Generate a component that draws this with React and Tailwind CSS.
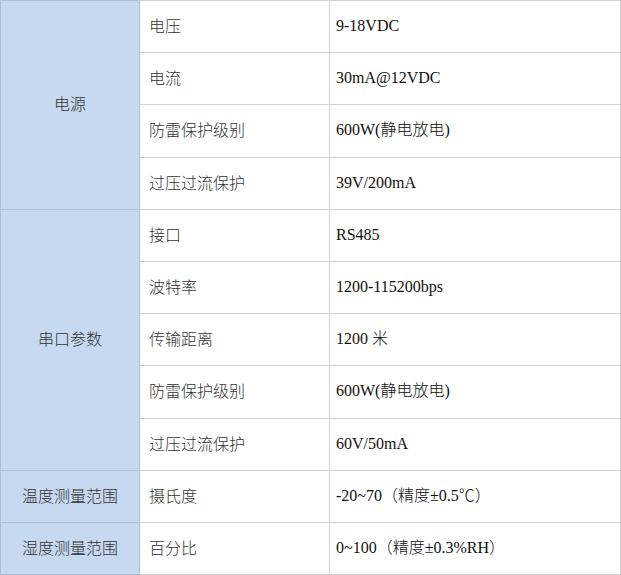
const GROUPS = [
  {
    name: '电源',
    rows: [
      ['电压', '9-18VDC'],
      ['电流', '30mA@12VDC'],
      ['防雷保护级别', '600W(静电放电)'],
      ['过压过流保护', '39V/200mA'],
    ],
  },
  {
    name: '串口参数',
    rows: [
      ['接口', 'RS485'],
      ['波特率', '1200-115200bps'],
      ['传输距离', '1200 米'],
      ['防雷保护级别', '600W(静电放电)'],
      ['过压过流保护', '60V/50mA'],
    ],
  },
  { name: '温度测量范围', rows: [['摄氏度', '-20~70（精度±0.5℃）']] },
  { name: '湿度测量范围', rows: [['百分比', '0~100（精度±0.3%RH）']] },
];

const cjk = { fontFamily: '"Noto Sans CJK SC", "Noto Sans", sans-serif' };
const serif = { fontFamily: '"Liberation Serif", "Noto Sans CJK SC", serif' };

export default function App() {
  return (
    <div className="h-[575px] w-[621px] overflow-hidden bg-white">
      <table className="w-[621px] table-fixed border-collapse text-[16px] text-[#2b2b2b]">
        <colgroup>
          <col className="w-[139px]" />
          <col className="w-[190px]" />
          <col />
        </colgroup>
        <tbody>
          {GROUPS.map((g) =>
            g.rows.map((r, i) => (
              <tr key={g.name + i} className="h-[52.2px]">
                {i === 0 && (
                  <td
                    rowSpan={g.rows.length}
                    className="border border-[#aebfd4] bg-[#c6d9f0] pb-[3px] text-center align-middle font-light text-[#333]"
                    style={cjk}
                  >
                    {g.name}
                  </td>
                )}
                <td className="border border-[#d2d2d2] pb-[3px] pl-[9px] align-middle font-light text-[#333]" style={cjk}>
                  {r[0]}
                </td>
                <td className="border border-[#d2d2d2] pb-[1px] pl-[6px] align-middle font-light text-[#111]" style={serif}>
                  {r[1]}
                </td>
              </tr>
            ))
          )}
        </tbody>
      </table>
    </div>
  );
}
